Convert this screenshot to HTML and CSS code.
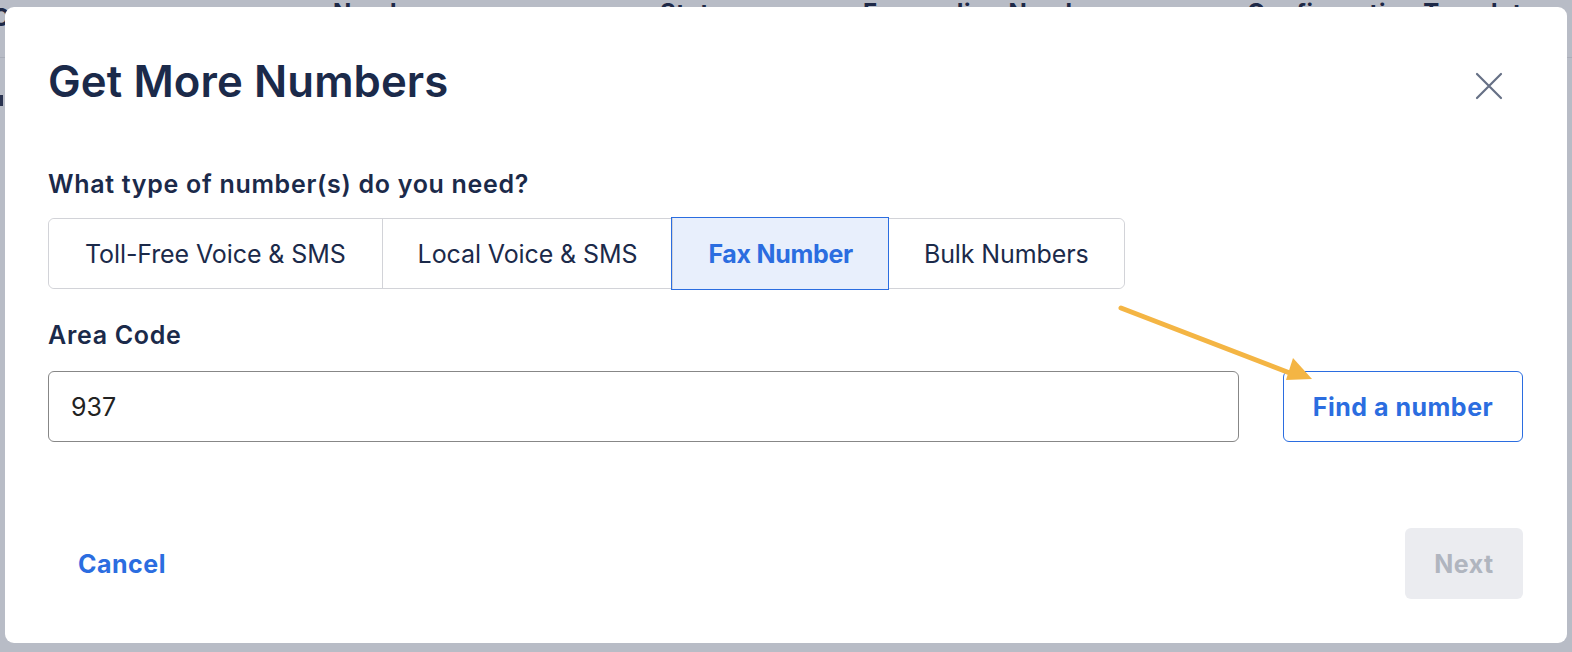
FILE: index.html
```html
<!DOCTYPE html>
<html lang="en">
<head>
<meta charset="utf-8">
<title>Get More Numbers</title>
<link rel="stylesheet" href="styles.css">
</head>
<body>
<div class="backdrop">
  <div class="bg-header">
    <span class="bg-col c1">C</span>
    <span class="bg-col c2">Number</span>
    <span class="bg-col c3">Status</span>
    <span class="bg-col c4">Forwarding Number</span>
    <span class="bg-col c5">Configuration Template</span>
  </div>
  <div class="bg-line"></div>
  <div class="bg-mark"></div>
</div>

<div class="modal" role="dialog" aria-labelledby="title">
  <header class="modal-head">
    <h1 id="title" class="modal-title">Get More Numbers</h1>
    <button class="close" aria-label="Close">
      <svg width="28" height="28" viewBox="0 0 28 28" fill="none" stroke="#667085" stroke-width="2.2" stroke-linecap="round">
        <path d="M2 2 L26 26 M26 2 L2 26"/>
      </svg>
    </button>
  </header>

  <div class="field">
    <div class="label">What type of number(s) do you need?</div>
    <div class="segmented">
      <button class="seg">Toll-Free Voice &amp; SMS</button>
      <button class="seg">Local Voice &amp; SMS</button>
      <button class="seg active">Fax Number</button>
      <button class="seg">Bulk Numbers</button>
    </div>
  </div>

  <div class="field area">
    <div class="label">Area Code</div>
    <div class="row">
      <div class="input">937</div>
      <button class="btn-outline">Find a number</button>
    </div>
    <svg class="arrow" width="210" height="100" viewBox="0 0 210 100">
      <line x1="6" y1="8" x2="180" y2="75" stroke="#f4b544" stroke-width="5" stroke-linecap="round"/>
      <polygon points="178,58 171,80 197,79" fill="#f4b544"/>
    </svg>
  </div>

  <footer class="modal-foot">
    <button class="btn-text">Cancel</button>
    <button class="btn-disabled" disabled>Next</button>
  </footer>
</div>
</body>
</html>
```

FILE: styles.css
```css
* { box-sizing: border-box; }

html, body {
  margin: 0;
  padding: 0;
}

body {
  width: 1572px;
  height: 652px;
  background: #b8bcc6;
  font-family: Inter, "Noto Sans", "Liberation Sans", sans-serif;
  position: relative;
  overflow: hidden;
}

.backdrop {
  position: absolute;
  inset: 0;
}

.bg-header {
  position: relative;
  height: 20px;
  color: #1e2947;
  font-weight: 700;
  font-size: 24px;
  line-height: 24px;
}

.bg-col {
  position: absolute;
  top: 1px;
  white-space: nowrap;
  letter-spacing: 0.6px;
}
.c1 { left: -8px; top: 6px; }
.c2 { left: 333px; }
.c3 { left: 660px; }
.c4 { left: 863px; }
.c5 { left: 1247px; }

.bg-line {
  position: absolute;
  left: 0;
  right: 0;
  top: 57px;
  height: 1px;
  background: #a9adb8;
}

.bg-mark {
  position: absolute;
  left: 0;
  top: 95px;
  width: 3px;
  height: 11px;
  background: #2a3350;
}

.modal {
  position: absolute;
  left: 5px;
  top: 7px;
  width: 1562px;
  height: 636px;
  background: #fff;
  border-radius: 9px;
  padding: 50px 44px 44px 43px;
  display: flex;
  flex-direction: column;
  color: #1b2a4a;
}

.modal-head {
  display: flex;
  justify-content: space-between;
  align-items: center;
  height: 50px;
}

.modal-title {
  margin: 0;
  font-size: 43.7px;
  line-height: 50px;
  font-weight: 600;
  color: #1b2a4a;
  letter-spacing: 0.1px;
}

.close {
  border: 0;
  background: none;
  padding: 0;
  width: 28px;
  height: 28px;
  margin-right: 20px;
  margin-top: 8px;
  cursor: pointer;
}
.close svg { display: block; }

.field { margin-top: 63px; }
.field.area { margin-top: 32px; position: relative; }

.label {
  font-size: 25px;
  line-height: 28px;
  font-weight: 600;
  letter-spacing: 0.7px;
  color: #1b2a4a;
}

.segmented {
  margin-top: 20px;
  display: inline-flex;
  height: 71px;
  border: 1px solid #d2d3d8;
  border-radius: 6px;
}

.seg {
  font-family: inherit;
  font-size: 25px;
  letter-spacing: -0.1px;
  color: #1b2a4a;
  background: #fff;
  border: 0;
  border-left: 1px solid #d2d3d8;
  padding: 0 35px;
  margin: 0;
  cursor: pointer;
}
.seg:first-child {
  border-left: 0;
  border-radius: 6px 0 0 6px;
  padding: 0 36px;
}
.seg:last-child { border-radius: 0 6px 6px 0; }

.seg.active {
  background: #e8effc;
  color: #2b6de0;
  font-weight: 700;
  letter-spacing: -0.3px;
  outline: 1px solid #2b6de0;
  position: relative;
  margin: -1px 0;
  padding: 0 35px;
}

.row {
  margin-top: 22px;
  display: flex;
  gap: 44px;
}

.input {
  flex: 1;
  height: 71px;
  border: 1px solid #878787;
  border-radius: 6px;
  padding: 0 22px;
  display: flex;
  align-items: center;
  font-size: 25px;
  color: #222;
}

.btn-outline {
  width: 240px;
  height: 71px;
  border: 1px solid #2b6de0;
  background: #fff;
  border-radius: 6px;
  font-family: inherit;
  font-size: 25px;
  font-weight: 700;
  color: #2b6de0;
  letter-spacing: 0.5px;
  cursor: pointer;
}

.arrow {
  position: absolute;
  left: 1067px;
  top: -21px;
  overflow: visible;
}

.modal-foot {
  margin-top: auto;
  display: flex;
  justify-content: space-between;
  align-items: center;
}

.btn-text {
  height: 71px;
  padding: 0 30px;
  border: 0;
  background: none;
  font-family: inherit;
  font-size: 25px;
  font-weight: 700;
  color: #2b6de0;
  letter-spacing: 0.5px;
}

.btn-disabled {
  height: 71px;
  width: 118px;
  border: 0;
  border-radius: 6px;
  background: #ebecf0;
  font-family: inherit;
  font-size: 25px;
  font-weight: 700;
  color: #b0b5bf;
  letter-spacing: 0.5px;
}
```
